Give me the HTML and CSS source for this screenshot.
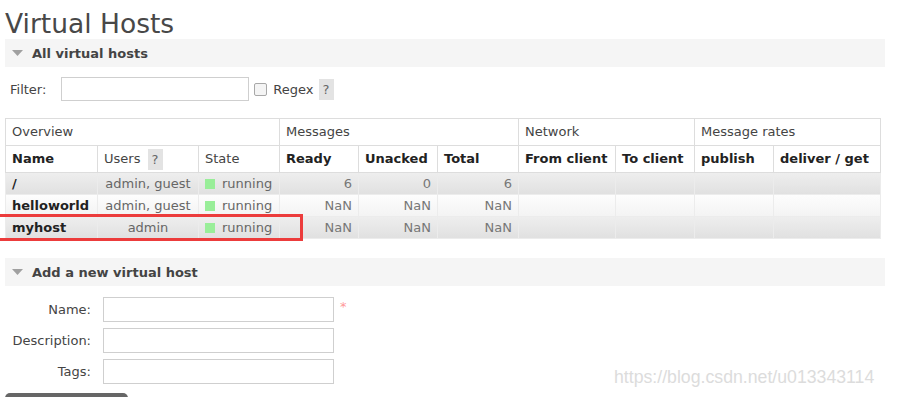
FILE: index.html
```html
<!DOCTYPE html>
<html lang="en">
<head>
    <meta charset="UTF-8">
    <title>Virtual Hosts</title>
    <link rel="stylesheet" href="styles.css">
</head>
<body>
    <div class="page">
        <h1>Virtual Hosts</h1>

        <div class="section">
            <h2 class="section-head">
                <svg class="toggle" width="11" height="6" viewBox="0 0 11 6"><polygon points="0,0 11,0 5.5,6" fill="#a0a0a0"/></svg>
                All virtual hosts
            </h2>
            <div class="filter">
                <label for="filter">Filter:</label>
                <input type="text" id="filter" class="filter-input">
                <input type="checkbox" class="check" id="regex">
                <label for="regex">Regex</label>
                <span class="help">?</span>
            </div>

            <table class="list">
                <colgroup>
                    <col class="c-name"><col class="c-users"><col class="c-state">
                    <col class="c-ready"><col class="c-unacked"><col class="c-total">
                    <col class="c-from"><col class="c-to">
                    <col class="c-pub"><col class="c-deliver">
                </colgroup>
                <thead>
                    <tr class="group">
                        <th colspan="3">Overview</th>
                        <th colspan="3">Messages</th>
                        <th colspan="2">Network</th>
                        <th colspan="2">Message rates</th>
                    </tr>
                    <tr>
                        <th>Name</th>
                        <th class="plain">Users <span class="help help-th">?</span></th>
                        <th class="plain">State</th>
                        <th>Ready</th>
                        <th>Unacked</th>
                        <th>Total</th>
                        <th>From client</th>
                        <th>To client</th>
                        <th>publish</th>
                        <th>deliver / get</th>
                    </tr>
                </thead>
                <tbody>
                    <tr class="alt1">
                        <td class="name">/</td>
                        <td class="center">admin, guest</td>
                        <td><span class="status"></span>running</td>
                        <td class="num">6</td>
                        <td class="num">0</td>
                        <td class="num">6</td>
                        <td></td><td></td><td></td><td></td>
                    </tr>
                    <tr class="alt2">
                        <td class="name">helloworld</td>
                        <td class="center">admin, guest</td>
                        <td><span class="status"></span>running</td>
                        <td class="num">NaN</td>
                        <td class="num">NaN</td>
                        <td class="num">NaN</td>
                        <td></td><td></td><td></td><td></td>
                    </tr>
                    <tr class="alt1">
                        <td class="name">myhost</td>
                        <td class="center">admin</td>
                        <td><span class="status"></span>running</td>
                        <td class="num">NaN</td>
                        <td class="num">NaN</td>
                        <td class="num">NaN</td>
                        <td></td><td></td><td></td><td></td>
                    </tr>
                </tbody>
            </table>
        </div>

        <div class="section section-add">
            <h2 class="section-head">
                <svg class="toggle" width="11" height="6" viewBox="0 0 11 6"><polygon points="0,0 11,0 5.5,6" fill="#a0a0a0"/></svg>
                Add a new virtual host
            </h2>
            <form class="form">
                <label for="vh-name">Name:</label>
                <input type="text" id="vh-name">
                <span class="req">*</span>

                <label for="vh-desc">Description:</label>
                <input type="text" id="vh-desc">
                <span></span>

                <label for="vh-tags">Tags:</label>
                <input type="text" id="vh-tags">
                <span></span>
            </form>
            <!-- only the top edge of the submit button is in view -->
            <button type="button" class="btn" aria-label="Add virtual host"></button>
        </div>
    </div>

    <!-- annotation + watermark from the screenshot -->
    <div class="mark"></div>
    <div class="watermark">https://blog.csdn.net/u013343114</div>
</body>
</html>
```

FILE: styles.css
```css
html {
    overflow: hidden;
}
body {
    margin: 0;
    font-family: "DejaVu Sans", Verdana, sans-serif;
    font-size: 13px;
    color: #444;
    background: #fff;
}
.page {
    width: 880px;
    padding: 8px 0 0 5px;
}
h1 {
    margin: 0;
    font-size: 26.5px;
    font-weight: normal;
    line-height: 31px;
    color: #484848;
}
.section-head {
    display: flex;
    align-items: center;
    height: 28px;
    margin: 0;
    padding-left: 7px;
    background: #f5f5f5;
    font-size: 13px;
    font-weight: bold;
    color: #444;
}
.toggle {
    margin-right: 9px;
}
.filter {
    display: flex;
    align-items: center;
    height: 24px;
    margin: 10px 0 0 5px;
}
.filter label[for=filter] {
    margin-right: 15px;
}
input[type=text] {
    box-sizing: border-box;
    margin: 0;
    padding: 2px 4px;
    border: 1px solid #cfcfcf;
    font: inherit;
}
.filter-input {
    width: 188px;
    height: 24px;
}
.check {
    appearance: none;
    -webkit-appearance: none;
    width: 13px;
    height: 13px;
    margin: 0 6px 0 5px;
    border: 1px solid #a8a8a8;
    border-radius: 2px;
    background: #f4f4f4;
}
.help {
    display: inline-block;
    width: 15px;
    height: 21px;
    line-height: 21px;
    margin-left: 5px;
    text-align: center;
    background: #e3e3e3;
    color: #666;
    font-weight: normal;
}
.help-th {
    margin: -3px 0 -3px 3px;
    vertical-align: middle;
}

/* table */
.list {
    width: 875px;
    margin-top: 17px;
    table-layout: fixed;
    border-collapse: collapse;
    border: 1px solid #ddd;
}
.c-name { width: 92px; }
.c-users { width: 101px; }
.c-state { width: 81px; }
.c-ready { width: 79px; }
.c-unacked { width: 79px; }
.c-total { width: 81px; }
.c-from { width: 97px; }
.c-to { width: 79px; }
.c-pub { width: 79px; }
.c-deliver { width: 107px; }
.list th {
    padding: 5px 6px;
    line-height: 16px;
    border: 1px solid #ddd;
    text-align: left;
    background: #fff;
    color: #222;
    white-space: nowrap;
}
.list .group th,
.list th.plain {
    font-weight: normal;
    color: #444;
}
.list td {
    padding: 3px 6px;
    line-height: 15px;
    border: 1px solid #ececec;
    color: #666;
    white-space: nowrap;
}
.list td.name {
    font-weight: bold;
    color: #222;
}
.list td.center {
    text-align: center;
}
.list td.num {
    text-align: right;
    color: #777;
}
.alt1 {
    background: linear-gradient(#eee, #e0e0e0);
}
.alt2 {
    background: linear-gradient(#fdfdfd, #f3f3f3);
}
.status {
    display: inline-block;
    width: 10px;
    height: 10px;
    margin-right: 7px;
    vertical-align: -1px;
    background: #99ee99;
}

/* add form */
.section-add {
    margin-top: 19px;
}
.form {
    display: grid;
    grid-template-columns: 86px 231px auto;
    justify-content: start;
    align-items: center;
    column-gap: 12px;
    row-gap: 6px;
    margin-top: 11px;
}
.form label {
    text-align: right;
}
.form input {
    height: 25px;
}
.req {
    align-self: start;
    margin: 2px 0 0 -6px;
    color: #f99;
}
.btn {
    display: block;
    margin-top: 9px;
    width: 123px;
    height: 28px;
    border: none;
    border-radius: 5px;
    background: #666;
}

.mark {
    position: absolute;
    left: -3px;
    top: 214px;
    width: 306px;
    height: 27px;
    box-sizing: border-box;
    border: 3px solid #ec3c3c;
}
.watermark {
    position: absolute;
    left: 614px;
    top: 369px;
    font-family: "Liberation Sans", Arial, sans-serif;
    font-size: 17.7px;
    line-height: 17px;
    color: #dcdcdc;
}
```
